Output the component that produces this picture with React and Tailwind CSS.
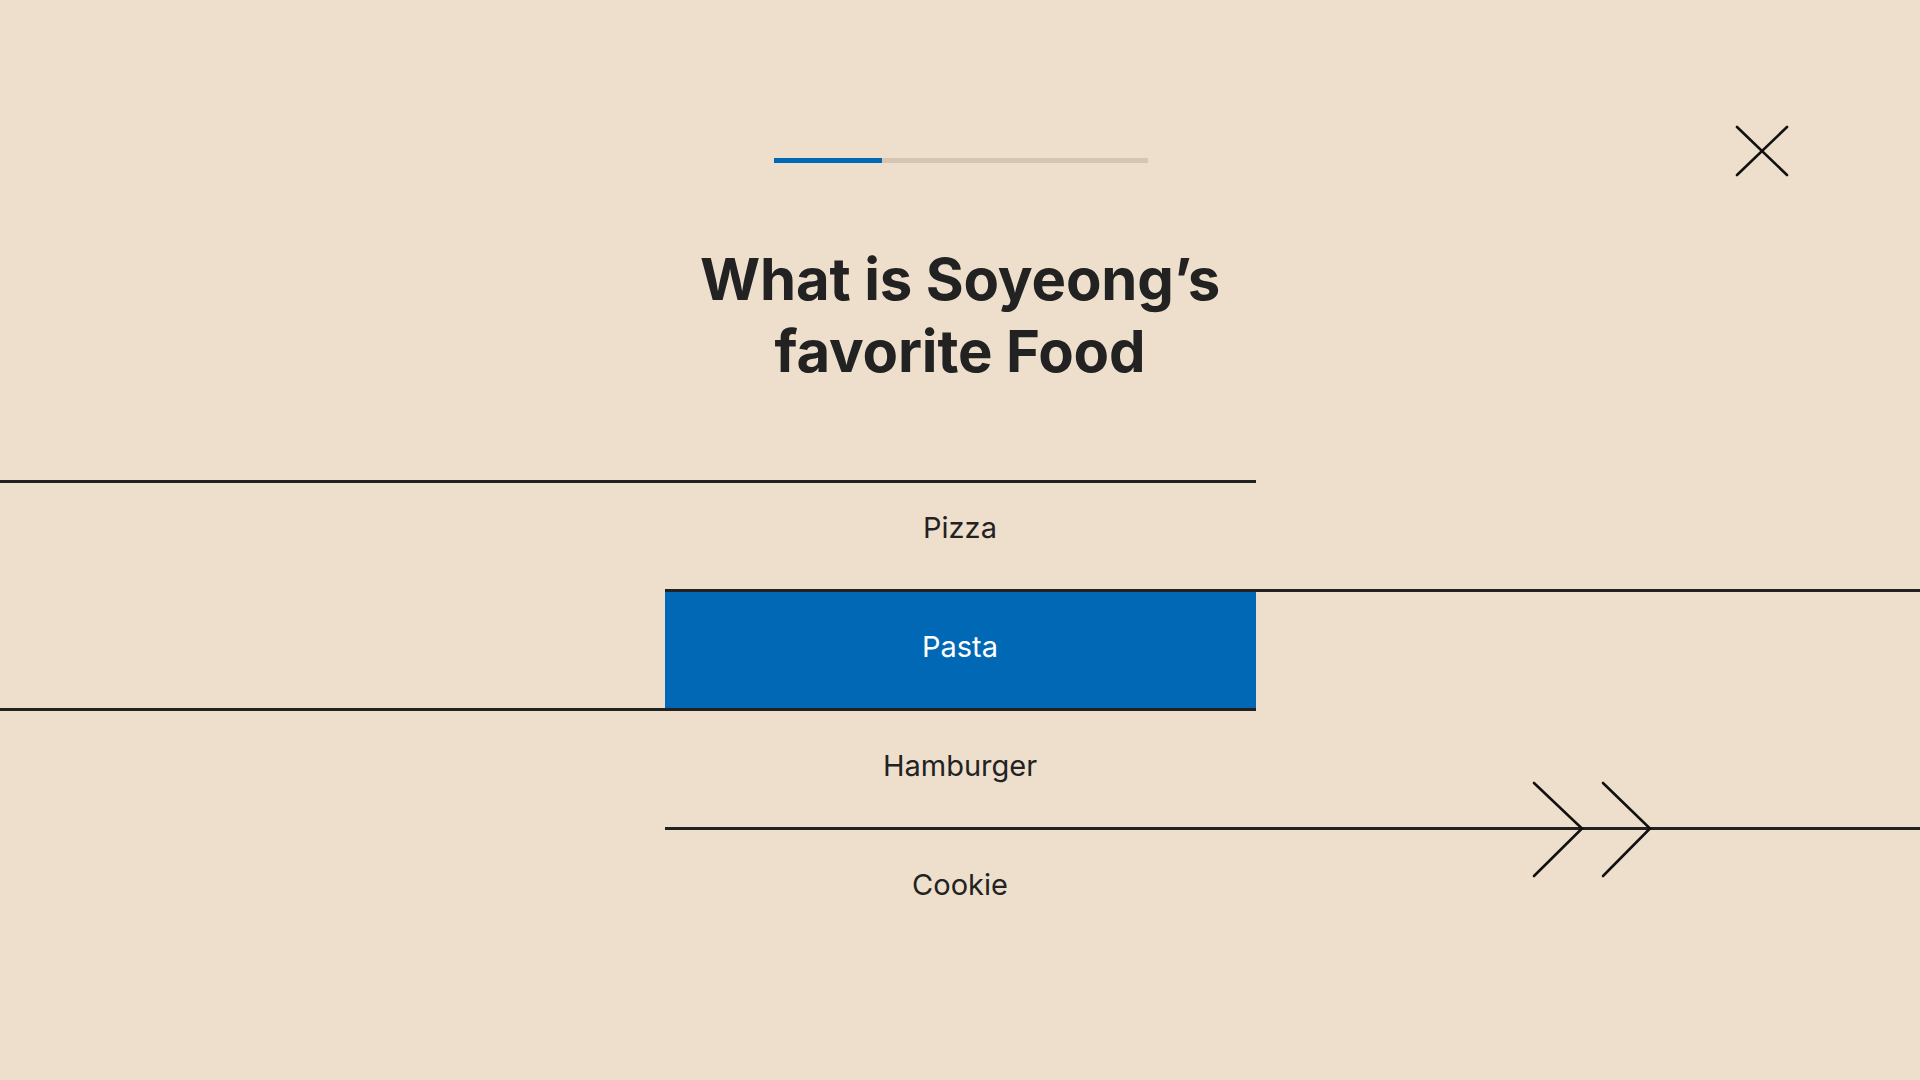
import React, { useState } from 'react';

const options = ['Pizza', 'Pasta', 'Hamburger', 'Cookie'];

const Rule = ({ side }) => (
  <div className={side === 'left' ? 'h-[3px] w-[1256px] bg-[#222]' : 'h-[3px] ml-[665px] bg-[#222]'} />
);

const Option = ({ label, active, first, onPick }) => (
  <button
    type="button"
    onClick={() => onPick(label)}
    className={`mx-auto w-[591px] flex items-center justify-center text-[29px] ${
      first ? 'h-[106px] pb-[17px]' : 'h-[116px] pb-[7px]'
    } ${active ? 'bg-[#0068b5] text-white' : 'text-[#222]'}`}
  >
    {label}
  </button>
);

const CloseIcon = () => (
  <svg width="54" height="52" viewBox="0 0 54 52" fill="none" stroke="#111" strokeWidth="2.6" strokeLinecap="round">
    <path d="M2 2 L52 50" />
    <path d="M52 2 L2 50" />
  </svg>
);

const App = () => {
  const [picked, setPicked] = useState('Pasta');

  return (
    <div className="min-h-screen w-full bg-[#eedfcc] overflow-hidden font-['Inter','Liberation_Sans',sans-serif]">
      <header className="grid grid-cols-[774px_374px_1fr] items-start">
        <div />
        <div className="pt-[158px]">
          <div className="h-[5px] w-full bg-[#d7c5b3]">
            <div className="h-full w-[108px] bg-[#0068b5]" />
          </div>
        </div>
        <div className="flex justify-end pt-[125px] pr-[131px]">
          <button type="button" aria-label="Close">
            <CloseIcon />
          </button>
        </div>
      </header>

      <h1 className="mt-[66px] text-center text-[58px] leading-[72px] font-bold text-[#222] tracking-[-0.15px]">
        What is Soyeong’s
        <br />
        favorite Food
      </h1>

      <div className="mt-[93px]">
        <Rule side="left" />
        <Option label={options[0]} first active={picked === options[0]} onPick={setPicked} />
        <Rule side="right" />
        <Option label={options[1]} active={picked === options[1]} onPick={setPicked} />
        <Rule side="left" />
        <Option label={options[2]} active={picked === options[2]} onPick={setPicked} />
        <div className="relative">
          <Rule side="right" />
          <svg
            className="absolute left-[1530px] top-[-47px]"
            width="125"
            height="100"
            viewBox="0 0 125 100"
            fill="none"
            stroke="#111"
            strokeWidth="2.6"
            strokeLinecap="round"
            strokeLinejoin="miter"
          >
            <path d="M4 3 L52 48.5 L4 96" />
            <path d="M73 3 L120 48.5 L73 96" />
          </svg>
        </div>
        <Option label={options[3]} active={picked === options[3]} onPick={setPicked} />
      </div>
    </div>
  );
};

export default App;
